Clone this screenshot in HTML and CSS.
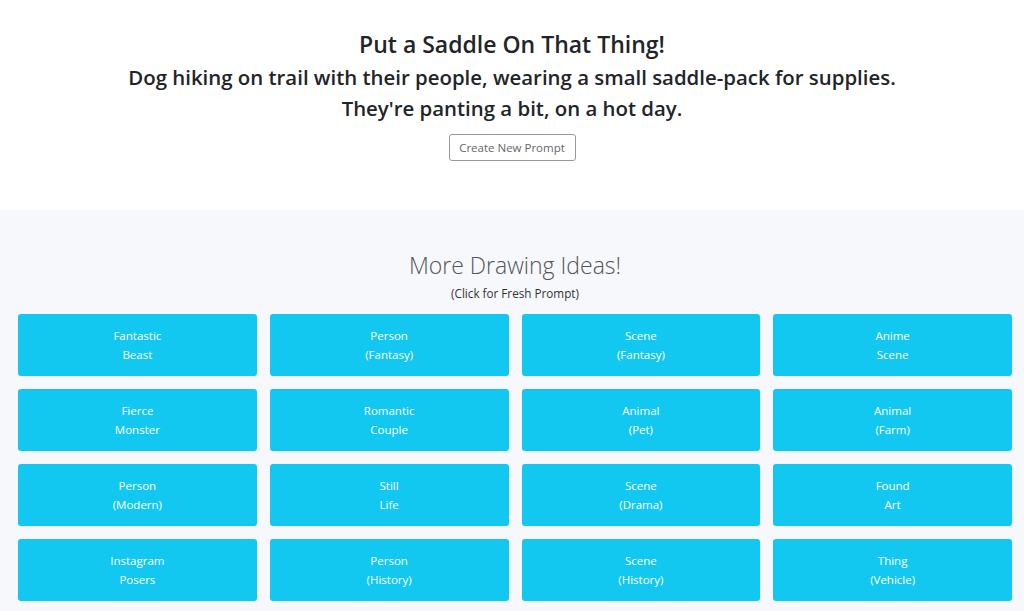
FILE: index.html
```html
<!DOCTYPE html>
<html lang="en">
<head>
    <meta charset="UTF-8">
    <meta name="viewport" content="width=device-width, initial-scale=1.0">
    <title>Drawing Prompts</title>
    <link rel="stylesheet" href="styles.css">
</head>
<body>
    <header class="prompt">
        <h1 class="prompt-title">Put a Saddle On That Thing!</h1>
        <p class="prompt-text">Dog hiking on trail with their people, wearing a small saddle-pack for supplies.<br>They're panting a bit, on a hot day.</p>
        <button class="new-btn">Create New Prompt</button>
    </header>

    <section class="ideas">
        <h2>More Drawing Ideas!</h2>
        <p class="ideas-sub">(Click for Fresh Prompt)</p>
        <div class="idea-grid">
            <a class="idea">Fantastic<br>Beast</a>
            <a class="idea">Person<br>(Fantasy)</a>
            <a class="idea">Scene<br>(Fantasy)</a>
            <a class="idea">Anime<br>Scene</a>
            <a class="idea">Fierce<br>Monster</a>
            <a class="idea">Romantic<br>Couple</a>
            <a class="idea">Animal<br>(Pet)</a>
            <a class="idea">Animal<br>(Farm)</a>
            <a class="idea">Person<br>(Modern)</a>
            <a class="idea">Still<br>Life</a>
            <a class="idea">Scene<br>(Drama)</a>
            <a class="idea">Found<br>Art</a>
            <a class="idea">Instagram<br>Posers</a>
            <a class="idea">Person<br>(History)</a>
            <a class="idea">Scene<br>(History)</a>
            <a class="idea">Thing<br>(Vehicle)</a>
        </div>
    </section>
</body>
</html>
```

FILE: styles.css
```css
body {
    margin: 0;
    font-family: "Open Sans", "Noto Sans", sans-serif;
    color: #212529;
    background: #fff;
}

.prompt {
    text-align: center;
    padding: 29px 0 49px;
}
.prompt-title {
    margin: 0;
    font-size: 23px;
    font-weight: 600;
    line-height: 31px;
}
.prompt-text {
    margin: 2px 0 0;
    font-size: 20.4px;
    font-weight: 600;
    line-height: 31px;
}
.new-btn {
    margin-top: 10px;
    height: 27px;
    width: 127px;
    padding: 0;
    font-family: inherit;
    font-size: 11.5px;
    color: #666;
    background: #fff;
    border: 1px solid #999;
    border-radius: 3px;
    cursor: pointer;
}

.ideas {
    background: #f7f8fc;
    padding: 40px 12px 20px 18px;
    text-align: center;
}
.ideas h2 {
    margin: 0;
    font-size: 23px;
    font-weight: 300;
    line-height: 30px;
    color: #555;
}
.ideas-sub {
    margin: 5px 0 0;
    font-size: 11.7px;
    line-height: 16px;
    color: #333;
}
.idea-grid {
    display: grid;
    grid-template-columns: repeat(4, 1fr);
    gap: 13px;
    margin-top: 13px;
}
.idea {
    display: flex;
    align-items: center;
    justify-content: center;
    height: 62px;
    box-sizing: border-box;
    background: #12c8f0;
    border-radius: 3px;
    color: #fff;
    font-size: 11.5px;
    line-height: 19px;
    cursor: pointer;
}
```
